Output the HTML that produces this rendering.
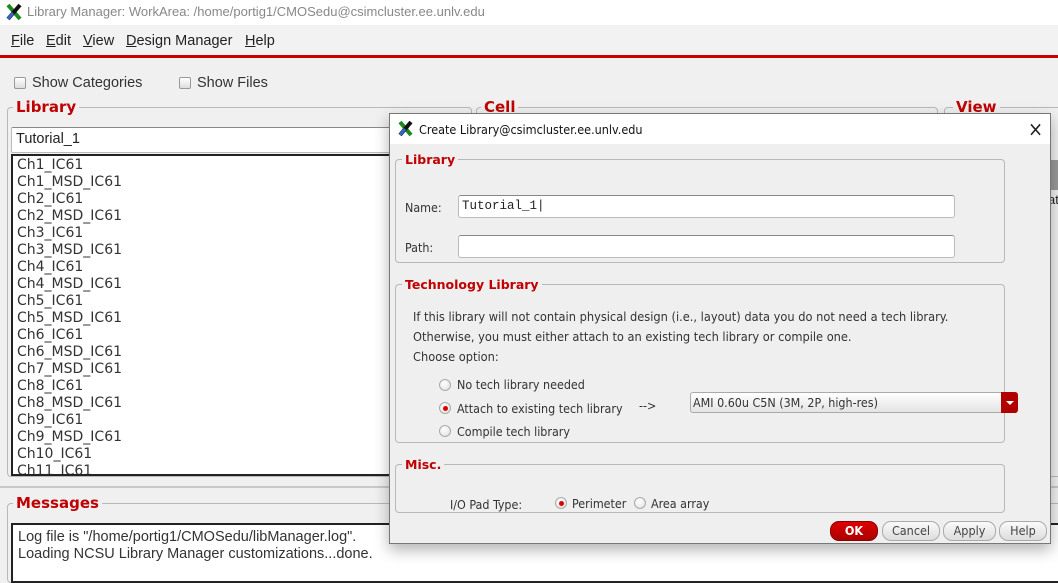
<!DOCTYPE html>
<html><head><meta charset="utf-8"><style>
*{margin:0;padding:0;box-sizing:border-box}
body{width:1058px;height:569px;overflow:hidden;background:#f0f0f0;font-family:"Liberation Sans",sans-serif;position:relative;color:#222}
.a{position:absolute}
.frame{position:absolute;border:1px solid #b8b8b8;border-radius:4px}
.lbl{position:absolute;background:#f0f0f0;padding:0 3px;color:#c00000;font-weight:bold;font-family:"DejaVu Sans",sans-serif}
.chk{position:absolute;width:12px;height:12px;border:1px solid #999;background:linear-gradient(#fff,#ddd);border-radius:2px}
.list div{height:17px;line-height:17px;font-size:14px;color:#333;font-family:"DejaVu Sans",sans-serif}
.dlg{font-family:"DejaVu Sans Condensed","DejaVu Sans",sans-serif;font-size:12.4px;color:#333}
.dlg .lbl{background:#efefef;font-size:12.5px}
.rad{position:absolute;width:12px;height:12px;border-radius:50%;border:1px solid #aaa;background:radial-gradient(circle at 40% 35%,#fff,#ddd)}
.rad.on::after{content:"";position:absolute;left:2.5px;top:2.5px;width:5px;height:5px;border-radius:50%;background:#d00}
.btn{position:absolute;top:521px;height:20px;border:1px solid #aaa;border-radius:9px;background:linear-gradient(#fafafa,#ddd);text-align:center;line-height:18px;font-size:12.5px;color:#444;font-family:"DejaVu Sans Condensed",sans-serif}
.inp{position:absolute;background:#fff;border:1px solid #bbb;border-top-color:#888;border-radius:3px}
.m{position:absolute;top:33px;font-size:14.5px;color:#222}
</style></head><body>
<div class="a" style="left:0;top:0;width:1058px;height:25px;background:#fff"></div>
<svg class="a" style="left:5px;top:3px" width="18" height="18"><path d="M3 2 L15 16" stroke="#1a8a1a" stroke-width="4"/><path d="M15 2 L3 16" stroke="#111" stroke-width="4"/><path d="M3 16 L8 10" stroke="#3366cc" stroke-width="3"/></svg>
<div class="a" style="left:27px;top:4px;font-size:13px;color:#888">Library Manager: WorkArea: /home/portig1/CMOSedu@csimcluster.ee.unlv.edu</div>
<div class="a" style="left:0;top:26px;width:1058px;height:29px;background:#f2f2f2"></div>
<div class="m" style="left:11px"><u>F</u>ile</div>
<div class="m" style="left:46px"><u>E</u>dit</div>
<div class="m" style="left:83px"><u>V</u>iew</div>
<div class="m" style="left:126px"><u>D</u>esign Manager</div>
<div class="m" style="left:245px"><u>H</u>elp</div>
<div class="a" style="left:0;top:55px;width:1058px;height:3px;background:#cc0000"></div>
<div class="chk" style="left:14px;top:77px"></div>
<div class="a" style="left:32px;top:75px;font-size:14.5px;color:#333">Show Categories</div>
<div class="chk" style="left:179px;top:77px"></div>
<div class="a" style="left:197px;top:75px;font-size:14.5px;color:#333">Show Files</div>
<div class="frame" style="left:7px;top:107px;width:465px;height:370px"></div>
<div class="lbl" style="left:13px;top:98px;font-size:15px">Library</div>
<div class="frame" style="left:476px;top:107px;width:462px;height:370px"></div>
<div class="lbl" style="left:481px;top:98px;font-size:15px">Cell</div>
<div class="frame" style="left:944px;top:107px;width:120px;height:370px"></div>
<div class="lbl" style="left:953px;top:98px;font-size:15px">View</div>
<div class="inp" style="left:11px;top:127px;width:460px;height:26px;border-radius:2px"></div>
<div class="a" style="left:16px;top:131px;font-size:14.5px">Tutorial_1</div>
<div class="a list" style="left:11px;top:154px;width:460px;height:322px;background:#fff;border:2px solid #222;border-right:none;padding:1px 0 0 4px;overflow:hidden">
<div>Ch1_IC61</div><div>Ch1_MSD_IC61</div><div>Ch2_IC61</div><div>Ch2_MSD_IC61</div><div>Ch3_IC61</div><div>Ch3_MSD_IC61</div><div>Ch4_IC61</div><div>Ch4_MSD_IC61</div><div>Ch5_IC61</div><div>Ch5_MSD_IC61</div><div>Ch6_IC61</div><div>Ch6_MSD_IC61</div><div>Ch7_MSD_IC61</div><div>Ch8_IC61</div><div>Ch8_MSD_IC61</div><div>Ch9_IC61</div><div>Ch9_MSD_IC61</div><div>Ch10_IC61</div><div>Ch11_IC61</div>
</div>
<div class="a" style="left:0;top:486px;width:1058px;height:2px;background:#c8c8c8"></div>
<div class="frame" style="left:7px;top:503px;width:1060px;height:80px"></div>
<div class="lbl" style="left:13px;top:494px;font-size:15px">Messages</div>
<div class="a" style="left:11px;top:523px;width:1060px;height:60px;background:#fff;border:2px solid #222;padding:4px 0 0 5px;font-size:14.5px;line-height:17px;color:#333">Log file is "/home/portig1/CMOSedu/libManager.log".<br>Loading NCSU Library Manager customizations...done.</div>
<div class="a" style="left:1040px;top:160px;width:18px;height:30px;background:#999"></div>
<div class="a" style="left:1048px;top:192px;font-size:13px">at</div>
<div class="a dlg" style="left:389px;top:113px;width:662px;height:431px;background:#efefef;border:1px solid #777;box-shadow:0 6px 14px rgba(0,0,0,.3)">
<div class="a" style="left:0;top:0;width:660px;height:30px;background:#fff"></div>
<svg class="a" style="left:7px;top:6px" width="17" height="17"><path d="M3 2 L14 15" stroke="#1a8a1a" stroke-width="4"/><path d="M14 2 L3 15" stroke="#111" stroke-width="4"/><path d="M3 15 L8 9" stroke="#3366cc" stroke-width="3"/></svg>
<div class="a" style="left:29px;top:8px;font-family:'DejaVu Sans Condensed',sans-serif;font-size:12.5px;color:#111">Create Library@csimcluster.ee.unlv.edu</div>
<div class="a" style="left:638px;top:3px;font-size:20px;color:#222">×</div>
<div class="frame" style="left:5px;top:45px;width:610px;height:104px"></div>
<div class="lbl" style="left:12px;top:38px">Library</div>
<div class="a" style="left:15px;top:86px">Name:</div>
<div class="inp" style="left:68px;top:81px;width:497px;height:23px"></div>
<div class="a" style="left:72px;top:85px;font-family:'Liberation Mono',monospace;font-size:12.5px;color:#222">Tutorial_1|</div>
<div class="a" style="left:15px;top:126px">Path:</div>
<div class="inp" style="left:68px;top:121px;width:497px;height:23px"></div>
<div class="frame" style="left:5px;top:170px;width:610px;height:159px"></div>
<div class="lbl" style="left:12px;top:163px">Technology Library</div>
<div class="a" style="left:23px;top:193px;line-height:20px;font-size:12.7px">If this library will not contain physical design (i.e., layout) data you do not need a tech library.<br>Otherwise, you must either attach to an existing tech library or compile one.<br>Choose option:</div>
<div class="rad" style="left:49px;top:265px"></div><div class="a" style="left:67px;top:263px">No tech library needed</div>
<div class="rad on" style="left:49px;top:288px"></div><div class="a" style="left:67px;top:287px">Attach to existing tech library</div>
<div class="a" style="left:249px;top:284px">--&gt;</div>
<div class="rad" style="left:49px;top:311px"></div><div class="a" style="left:67px;top:310px">Compile tech library</div>
<div class="a" style="left:300px;top:278px;width:327px;height:21px;border:1px solid #aaa;border-radius:3px;background:linear-gradient(#fff,#e4e4e4)"></div>
<div class="a" style="left:303px;top:281px">AMI 0.60u C5N (3M, 2P, high-res)</div>
<div class="a" style="left:611px;top:278px;width:17px;height:21px;background:#b00000;border-radius:0 3px 3px 0"></div>
<div class="a" style="left:616px;top:287px;width:0;height:0;border-left:4px solid transparent;border-right:4px solid transparent;border-top:4px solid #fff"></div>
<div class="frame" style="left:5px;top:350px;width:610px;height:49px"></div>
<div class="lbl" style="left:12px;top:343px">Misc.</div>
<div class="a" style="left:60px;top:383px">I/O Pad Type:</div>
<div class="rad on" style="left:165px;top:383px"></div><div class="a" style="left:182px;top:382px">Perimeter</div>
<div class="rad" style="left:244px;top:383px"></div><div class="a" style="left:261px;top:382px">Area array</div>
</div>
<div class="btn" style="left:830px;width:48px;background:linear-gradient(#d00,#a00);border-color:#800;color:#fff;font-weight:bold">OK</div>
<div class="btn" style="left:882px;width:58px">Cancel</div>
<div class="btn" style="left:943px;width:53px">Apply</div>
<div class="btn" style="left:999px;width:48px">Help</div>
</body></html>
